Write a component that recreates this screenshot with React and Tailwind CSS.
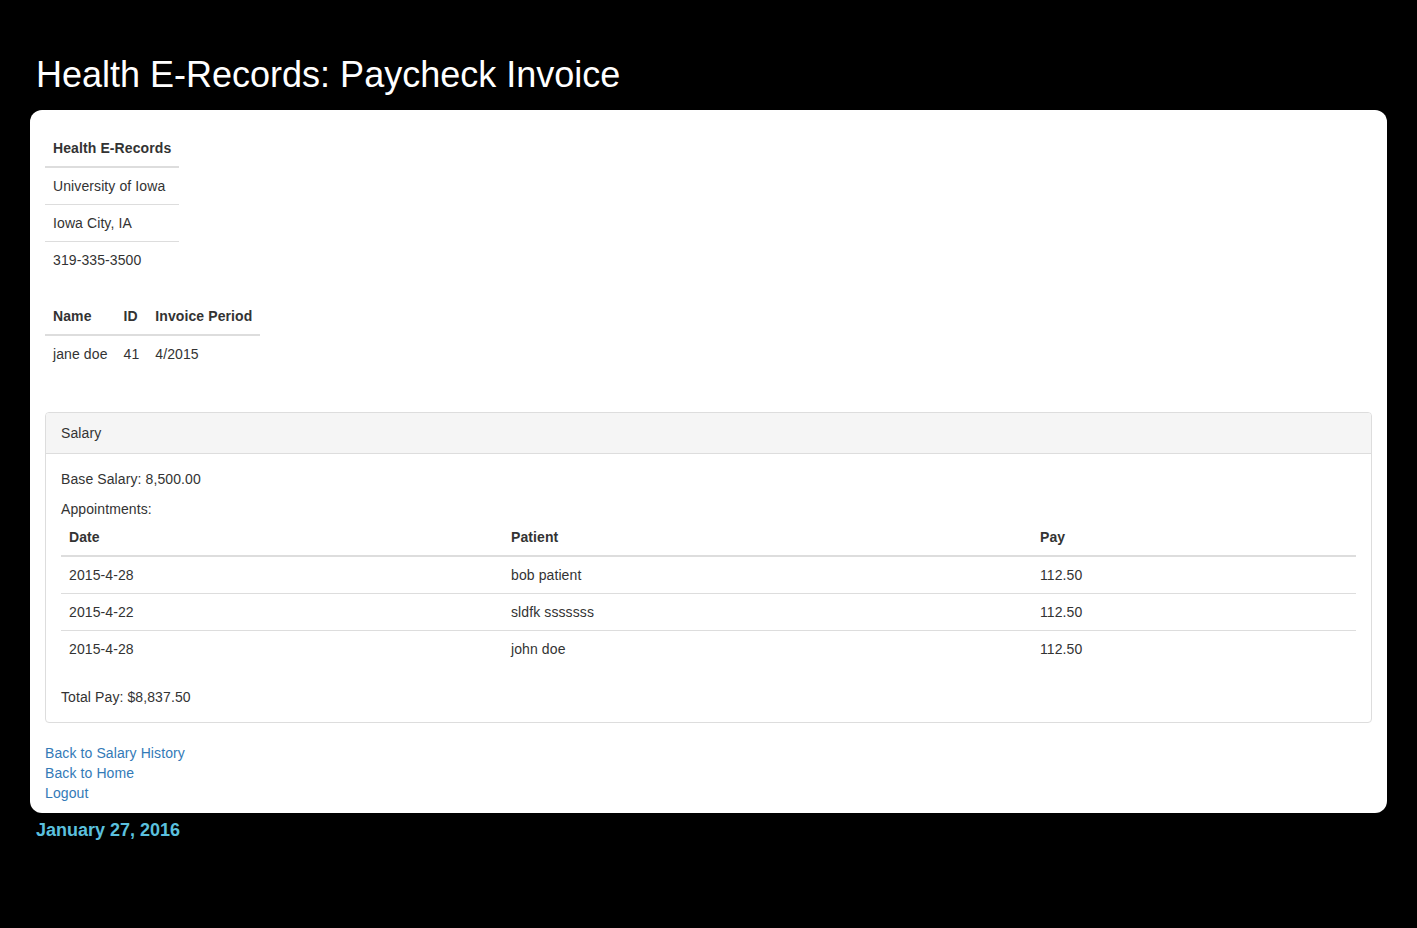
export default function App() {
  const appts = [
    ["2015-4-28", "bob patient", "112.50"],
    ["2015-4-22", "sldfk sssssss", "112.50"],
    ["2015-4-28", "john doe", "112.50"],
  ];
  return (
    <div className="min-h-[928px] bg-black text-[14px] leading-[20px] text-[#333] tracking-[0.1px]" style={{ fontFamily: '"Liberation Sans", Arial, sans-serif' }}>
      <div className="pt-[55px] pl-[36px] pb-[15px]">
        <h1 className="text-[36px] leading-[40px] text-white font-normal tracking-normal">Health E-Records: Paycheck Invoice</h1>
      </div>
      <div className="mx-[30px] bg-white rounded-[12px] px-[15px] pt-[20px] pb-[10px]">
        <table className="border-collapse mb-[20px]">
          <thead>
            <tr>
              <th className="text-left font-bold px-[8px] py-[8px] border-b-2 border-[#ddd]">Health E-Records</th>
            </tr>
          </thead>
          <tbody>
            <tr><td className="px-[8px] py-[8px]">University of Iowa</td></tr>
            <tr><td className="px-[8px] py-[8px] border-t border-[#ddd]">Iowa City, IA</td></tr>
            <tr><td className="px-[8px] py-[8px] border-t border-[#ddd]">319-335-3500</td></tr>
          </tbody>
        </table>
        <table className="border-collapse mb-[40px]">
          <thead>
            <tr>
              <th className="text-left font-bold p-[8px] border-b-2 border-[#ddd]">Name</th>
              <th className="text-left font-bold p-[8px] border-b-2 border-[#ddd]">ID</th>
              <th className="text-left font-bold p-[8px] border-b-2 border-[#ddd]">Invoice Period</th>
            </tr>
          </thead>
          <tbody>
            <tr>
              <td className="p-[8px]">jane doe</td>
              <td className="p-[8px]">41</td>
              <td className="p-[8px]">4/2015</td>
            </tr>
          </tbody>
        </table>
        <div className="border border-[#ddd] rounded-[4px] mb-[20px]">
          <div className="bg-[#f5f5f5] border-b border-[#ddd] px-[15px] py-[10px] rounded-t-[3px]">Salary</div>
          <div className="p-[15px]">
            <p className="mb-[10px]">Base Salary: 8,500.00</p>
            <p>Appointments:</p>
            <table className="w-full border-collapse mb-[20px]">
              <thead>
                <tr>
                  <th className="w-[442px] text-left font-bold p-[8px] border-b-2 border-[#ddd]">Date</th>
                  <th className="w-[529px] text-left font-bold p-[8px] border-b-2 border-[#ddd]">Patient</th>
                  <th className="text-left font-bold p-[8px] border-b-2 border-[#ddd]">Pay</th>
                </tr>
              </thead>
              <tbody>
                {appts.map((r, i) => (
                  <tr key={i}>
                    {r.map((c, j) => (
                      <td key={j} className={"p-[8px] " + (i > 0 ? "border-t border-[#ddd]" : "")}>{c}</td>
                    ))}
                  </tr>
                ))}
              </tbody>
            </table>
            <p>Total Pay: $8,837.50</p>
          </div>
        </div>
        <div className="flex flex-col items-start">
          <a className="text-[#337ab7]" href="#">Back to Salary History</a>
          <a className="text-[#337ab7]" href="#">Back to Home</a>
          <a className="text-[#337ab7]" href="#">Logout</a>
        </div>
      </div>
      <div className="pl-[36px] pt-[6px] text-[18px] leading-[22px] font-bold text-[#5bc0de] tracking-normal">January 27, 2016</div>
    </div>
  );
}
